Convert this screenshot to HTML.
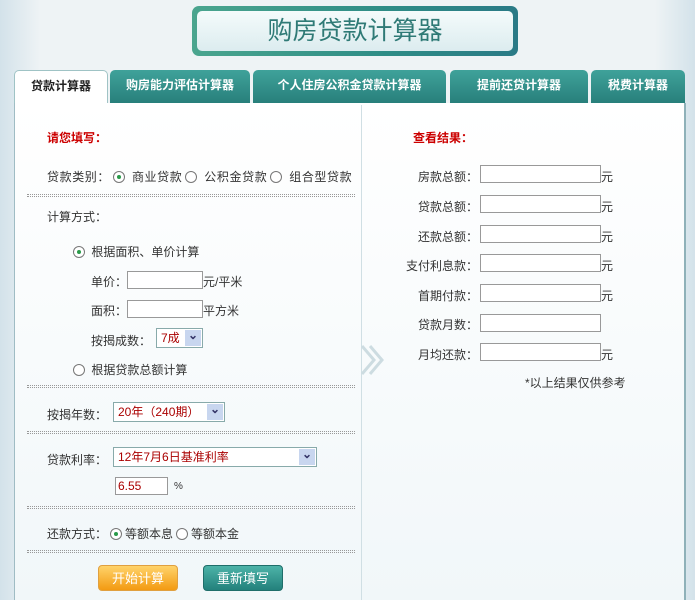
<!DOCTYPE html>
<html><head><meta charset="utf-8"><style>
*{margin:0;padding:0;box-sizing:border-box}
body{width:695px;height:600px;overflow:hidden;background:linear-gradient(90deg,#d3e2ea 0,#eef3f5 40px,#eef3f5 655px,#d3e2ea 695px);font:12px "Liberation Sans","Noto Sans CJK SC",sans-serif;color:#333;position:relative}
.a{position:absolute;white-space:nowrap}
.title{left:192px;top:6px;width:326px;height:50px;border-radius:7px;background:linear-gradient(90deg,#4aa58e,#2e8c86 60%,#2a7a86);padding:5px}
.title div{width:100%;height:100%;border-radius:5px;background:linear-gradient(180deg,#f4fbfb,#dcecef);text-align:center;font-size:25px;line-height:40px;color:#2f7a76}
.tab{top:70px;height:33px;background:linear-gradient(180deg,#3fa29a,#287f7b);border-radius:5px 5px 0 0;color:#fff;font-weight:bold;text-align:center;line-height:31px;font-size:12px}
.tab.on{background:#fff;color:#222;border:1px solid #9fc3c5;border-bottom:none}
.panel{left:14px;top:103px;width:672px;height:497px;background:linear-gradient(180deg,#fff,#f1f7f9);border-left:1px solid #9fbcc4;border-right:2px solid #8fb1b9}
.dot{position:absolute;left:27px;width:328px;border-top:1px dotted #999;height:3px;border-bottom:1px dotted #999}
.red{color:#c00;font-weight:bold}
.rad{display:inline-block;width:12px;height:12px;border:1px solid #777;border-radius:50%;vertical-align:-2px;background:#fff;position:relative;margin:0 3px}
.rad.c::after{content:"";position:absolute;left:3px;top:3px;width:4px;height:4px;border-radius:50%;background:#2a9a4a}
.in{position:absolute;height:18px;border:1px solid #999;background:#fff}
.sel{position:absolute;height:20px;border:1px solid #8aa;background:#fff;color:#a00;padding-left:4px;line-height:18px}
.sel::after{content:"⌄";position:absolute;right:1px;top:1px;width:16px;height:16px;background:#c8d6ef;color:#336;font-weight:bold;text-align:center;line-height:10px}
.btn{position:absolute;top:565px;width:80px;height:26px;border-radius:4px;color:#fff;text-align:center;line-height:26px;font-size:13px}
.lab{position:absolute;left:380px;width:98px;text-align:right}
</style></head><body>
<div class="a title"><div>购房贷款计算器</div></div>
<div class="a tab on" style="left:14px;width:94px">贷款计算器</div>
<div class="a tab" style="left:110px;width:140px">购房能力评估计算器</div>
<div class="a tab" style="left:253px;width:193px">个人住房公积金贷款计算器</div>
<div class="a tab" style="left:450px;width:138px">提前还贷计算器</div>
<div class="a tab" style="left:591px;width:94px">税费计算器</div>
<div class="a panel"></div>
<div class="a" style="left:361px;top:105px;width:1px;height:495px;background:#d0dfe4"></div>
<svg class="a" style="left:360px;top:344px" width="30" height="32"><path d="M2 2 L14 16 L2 30 M10 2 L22 16 L10 30" fill="none" stroke="#cddce1" stroke-width="3"/></svg>

<div class="a red" style="left:47px;top:129px">请您填写：</div>
<div class="a" style="left:47px;top:168px;letter-spacing:0.6px">贷款类别：<span class="rad c"></span> 商业贷款<span class="rad"></span> 公积金贷款<span class="rad"></span> 组合型贷款</div>
<div class="dot" style="top:194px"></div>
<div class="a" style="left:47px;top:208px">计算方式：</div>
<div class="a" style="left:70px;top:243px"><span class="rad c"></span> 根据面积、单价计算</div>
<div class="a" style="left:91px;top:273px">单价：</div><div class="in" style="left:127px;top:271px;width:76px"></div><div class="a" style="left:203px;top:273px">元/平米</div>
<div class="a" style="left:91px;top:302px">面积：</div><div class="in" style="left:127px;top:300px;width:76px"></div><div class="a" style="left:203px;top:302px">平方米</div>
<div class="a" style="left:91px;top:332px">按揭成数：</div><div class="sel" style="left:156px;top:328px;width:47px">7成</div>
<div class="a" style="left:70px;top:361px"><span class="rad"></span> 根据贷款总额计算</div>
<div class="dot" style="top:385px"></div>
<div class="a" style="left:47px;top:406px">按揭年数：</div><div class="sel" style="left:113px;top:402px;width:112px">20年（240期）</div>
<div class="dot" style="top:431px"></div>
<div class="a" style="left:47px;top:451px">贷款利率：</div><div class="sel" style="left:113px;top:447px;width:204px">12年7月6日基准利率</div>
<div class="in" style="left:115px;top:477px;width:53px;color:#a00;line-height:16px;padding-left:2px">6.55</div><div class="a" style="left:174px;top:481px;font-size:10px">%</div>
<div class="dot" style="top:506px"></div>
<div class="a" style="left:47px;top:525px">还款方式：<span class="rad c"></span>等额本息<span class="rad"></span>等额本金</div>
<div class="dot" style="top:550px"></div>
<div class="btn" style="left:98px;background:linear-gradient(180deg,#ffd36a,#f39a12);border:1px solid #e0a040">开始计算</div>
<div class="btn" style="left:203px;background:linear-gradient(180deg,#4db3a8,#23817c);border:1px solid #1f6e6a">重新填写</div>

<div class="a red" style="left:413px;top:129px">查看结果：</div>
<div class="lab" style="top:168px">房款总额：</div><div class="in" style="left:480px;top:165px;width:121px"></div><div class="a" style="left:601px;top:168px">元</div>
<div class="lab" style="top:198px">贷款总额：</div><div class="in" style="left:480px;top:195px;width:121px"></div><div class="a" style="left:601px;top:198px">元</div>
<div class="lab" style="top:228px">还款总额：</div><div class="in" style="left:480px;top:225px;width:121px"></div><div class="a" style="left:601px;top:228px">元</div>
<div class="lab" style="top:257px">支付利息款：</div><div class="in" style="left:480px;top:254px;width:121px"></div><div class="a" style="left:601px;top:257px">元</div>
<div class="lab" style="top:287px">首期付款：</div><div class="in" style="left:480px;top:284px;width:121px"></div><div class="a" style="left:601px;top:287px">元</div>
<div class="lab" style="top:316px">贷款月数：</div><div class="in" style="left:480px;top:314px;width:121px"></div>
<div class="lab" style="top:346px">月均还款：</div><div class="in" style="left:480px;top:343px;width:121px"></div><div class="a" style="left:601px;top:346px">元</div>
<div class="a" style="left:525px;top:374px">*以上结果仅供参考</div>
</body></html>
